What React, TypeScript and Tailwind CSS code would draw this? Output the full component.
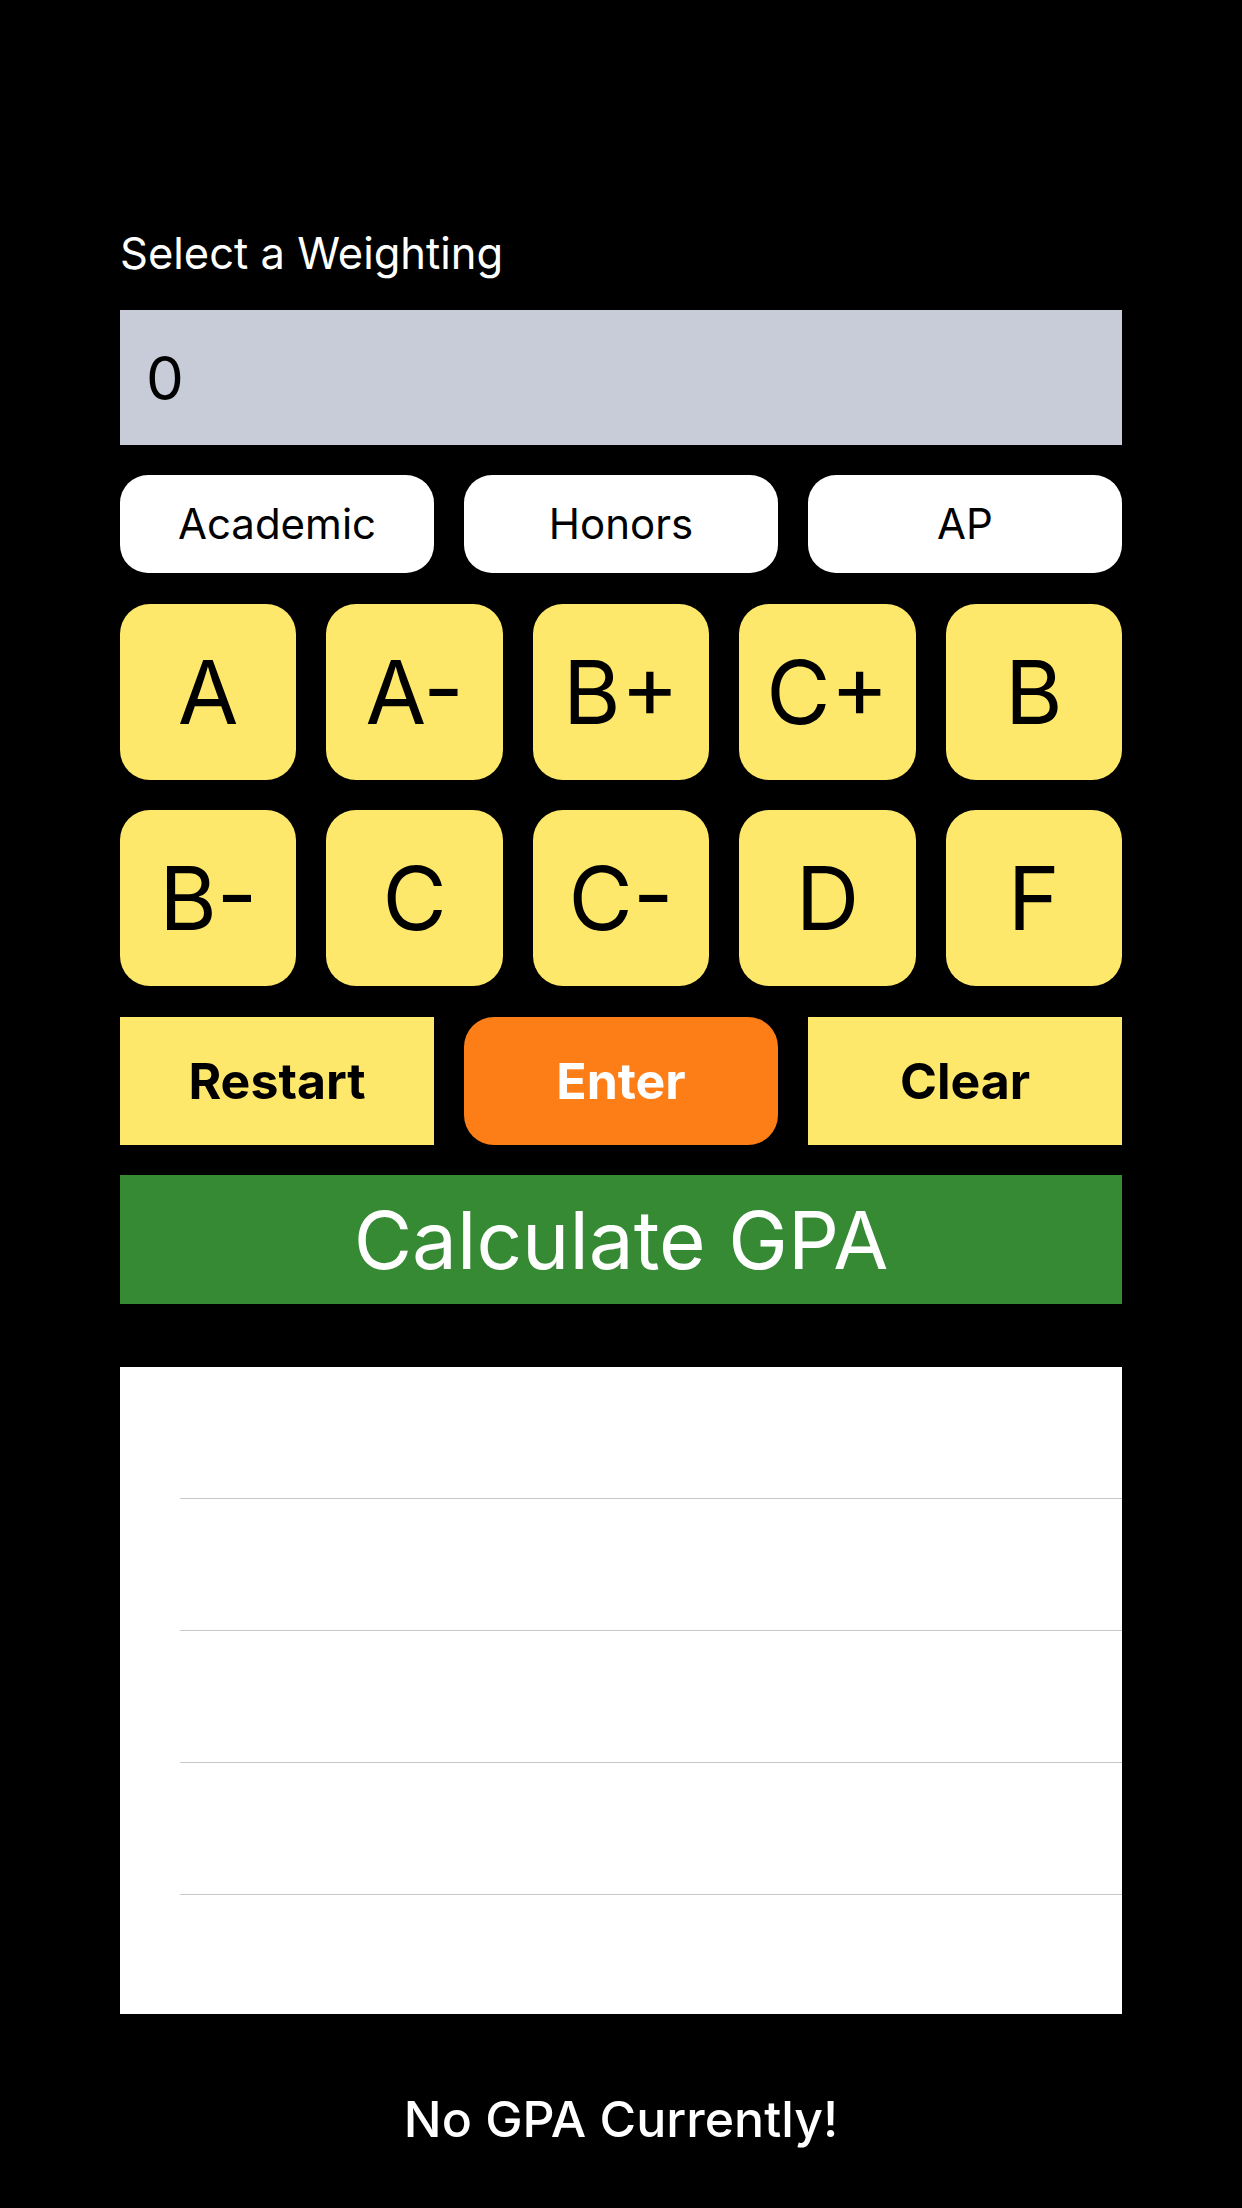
const grades = ["A", "A-", "B+", "C+", "B", "B-", "C", "C-", "D", "F"];
const weightings = ["Academic", "Honors", "AP"];

function GradeKey({ label }: { label: string }) {
  return (
    <button className="h-[176px] rounded-[30px] bg-[#fee86b] text-black text-[88px] leading-none flex items-center justify-center">
      {label}
    </button>
  );
}

export default function App() {
  return (
    <div
      className="min-h-[2208px] w-[1242px] bg-black px-[120px] pt-[232px] flex flex-col"
      style={{ fontFamily: "Inter, 'Noto Sans', sans-serif" }}
    >
      <div className="text-white text-[43.5px] leading-none h-[43px]">Select a Weighting</div>

      {/* current weighting display */}
      <div className="mt-[35px] h-[135px] bg-[#c7ccd8] flex items-center pl-[26px] text-black text-[60px] leading-none">
        0
      </div>

      <div className="mt-[30px] grid grid-cols-3 gap-[30px]">
        {weightings.map((w) => (
          <button
            key={w}
            className="h-[98px] rounded-[28px] bg-white text-black text-[42px] leading-none flex items-center justify-center"
          >
            {w}
          </button>
        ))}
      </div>

      <div className="mt-[31px] grid grid-cols-5 gap-[30px]">
        {grades.map((g) => (
          <GradeKey key={g} label={g} />
        ))}
      </div>

      <div className="mt-[31px] grid grid-cols-3 gap-[30px]">
        <button className="h-[128px] bg-[#fee86b] text-black font-bold text-[50px] leading-none flex items-center justify-center">
          Restart
        </button>
        <button className="h-[128px] rounded-[30px] bg-[#fd7e17] text-white font-bold text-[50px] leading-none flex items-center justify-center">
          Enter
        </button>
        <button className="h-[128px] bg-[#fee86b] text-black font-bold text-[50px] leading-none flex items-center justify-center">
          Clear
        </button>
      </div>

      <button className="mt-[30px] h-[129px] bg-[#358a33] text-white text-[80px] leading-none flex items-center justify-center">
        Calculate GPA
      </button>

      {/* course list */}
      <div className="mt-[63px] h-[647px] bg-white overflow-hidden">
        {[0, 1, 2, 3, 4].map((i) => (
          <div key={i} className="h-[132px] ml-[60px] border-b border-[#c8c7cc]" />
        ))}
      </div>

      <div className="mt-[80px] text-center text-white font-medium text-[50px] leading-none">
        No GPA Currently!
      </div>
    </div>
  );
}
